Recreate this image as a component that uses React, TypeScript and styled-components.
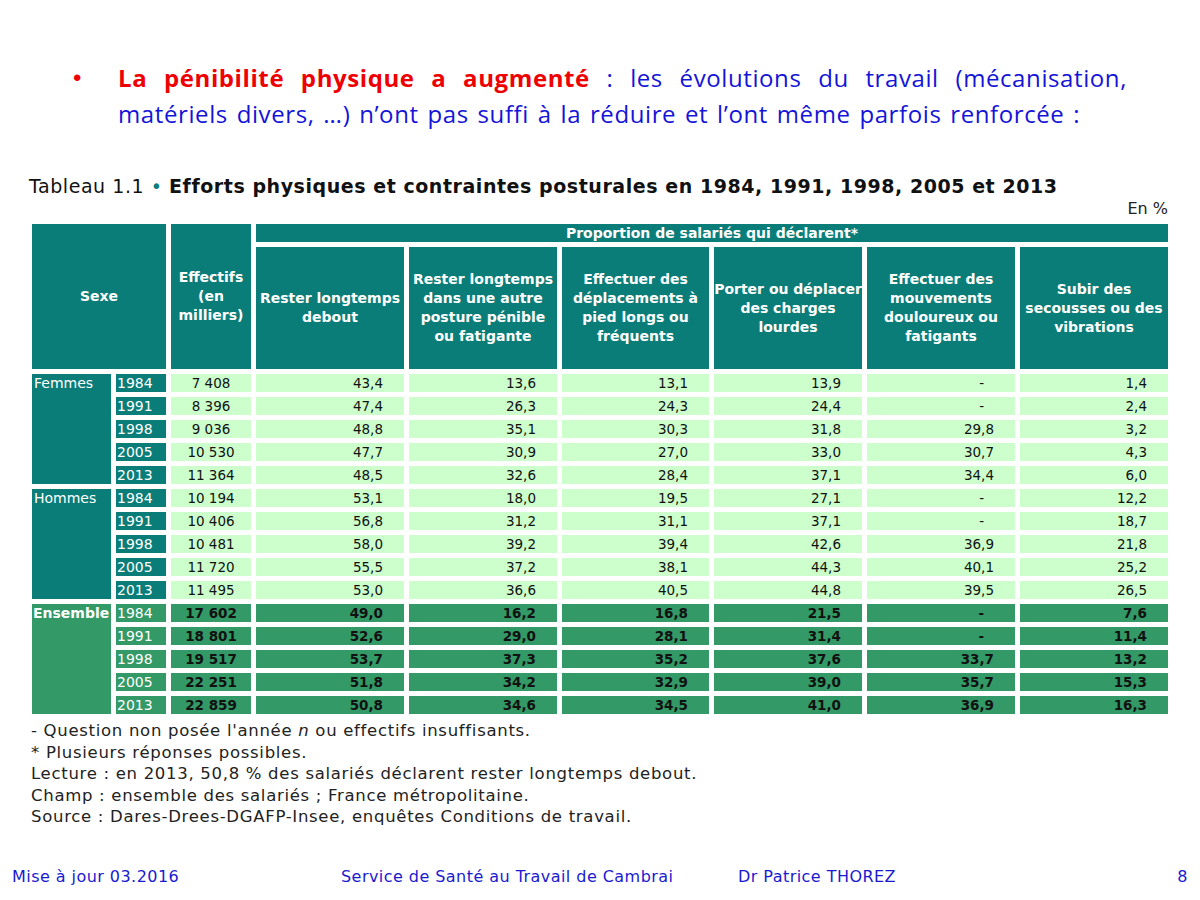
import React from "react";
import styled, { createGlobalStyle } from "styled-components";

const Global = createGlobalStyle`
  html, body { margin: 0; padding: 0; background: #ffffff; }
  * { box-sizing: border-box; }
`;

const TEAL = "#0b7d79";
const LIGHT = "#ccffcc";
const GREEN = "#339966";

const Page = styled.div`
  width: 1200px;
  height: 900px;
  display: flex;
  flex-direction: column;
  overflow: hidden;
  background: #fff;
`;

const Intro = styled.div`
  display: flex;
  margin-top: 60px;
  padding-left: 73px;
  font-family: "Open Sans", "Noto Sans", sans-serif;
  font-size: 24px;
  line-height: 36px;
`;

const Bullet = styled.span`
  width: 45px;
  flex: none;
  color: #ee0000;
  font-family: "Liberation Sans", sans-serif;
`;

const IntroText = styled.div`
  width: 1009px;
  color: #1414d8;
  letter-spacing: 0.6px;
  word-spacing: 2px;
`;

const IntroLine = styled.span<{ $justify?: boolean }>`
  display: block;
  white-space: nowrap;
  ${(p) =>
    p.$justify
      ? `white-space: normal; text-align: justify; text-align-last: justify;`
      : ""}
`;

const Red = styled.strong`
  color: #ee0000;
  font-weight: 700;
`;

const Title = styled.div`
  margin: 42px 0 0 29px;
  font-family: "DejaVu Sans", Verdana, sans-serif;
  font-size: 19px;
  letter-spacing: 0.55px;
  line-height: 24px;
  color: #111;
  white-space: nowrap;
`;

const Dot = styled.span`
  color: ${TEAL};
`;

const Unit = styled.div`
  margin-top: 2px;
  width: 1168px;
  text-align: right;
  font-family: "DejaVu Sans", Verdana, sans-serif;
  font-size: 16px;
  line-height: 18px;
  color: #222;
`;

const Grid = styled.div`
  margin: 6px 0 0 32px;
  display: grid;
  grid-template-columns: 79px 50px 80px 148px 148px 147px 148px 148px 148px;
  grid-template-rows: 18px 122px repeat(15, 18px);
  gap: 5px;
  font-family: "DejaVu Sans", Verdana, sans-serif;
  font-size: 13.5px;
`;

const Head = styled.div<{ $col: string; $row: string }>`
  grid-column: ${(p) => p.$col};
  grid-row: ${(p) => p.$row};
  background: ${TEAL};
  color: #fff;
  font-weight: 700;
  font-size: 14px;
  line-height: 19px;
  display: flex;
  align-items: center;
  justify-content: center;
  text-align: center;
  white-space: nowrap;
  overflow: hidden;
`;

const Group = styled.div<{ $row: number; $total?: boolean }>`
  grid-column: 1;
  grid-row: ${(p) => p.$row} / span 5;
  background: ${(p) => (p.$total ? GREEN : TEAL)};
  color: #fff;
  font-weight: ${(p) => (p.$total ? 700 : 400)};
  line-height: 18px;
  padding-left: ${(p) => (p.$total ? 1 : 2)}px;
  font-size: 14px;
  white-space: nowrap;
`;

const Year = styled.div<{ $total?: boolean }>`
  grid-column: 2;
  background: ${(p) => (p.$total ? GREEN : TEAL)};
  color: #fff;
  line-height: 18px;
  padding-left: 1px;
  font-size: 14px;
`;

const Cell = styled.div<{ $total?: boolean; $center?: boolean; $dash?: boolean }>`
  background: ${(p) => (p.$total ? GREEN : LIGHT)};
  color: #111;
  font-weight: ${(p) => (p.$total ? 700 : 400)};
  line-height: 18px;
  text-align: ${(p) => (p.$center ? "center" : "right")};
  padding-right: ${(p) => (p.$center ? 0 : p.$dash ? 31 : 21)}px;
  white-space: nowrap;
`;

const Notes = styled.div`
  margin: 6px 0 0 31px;
  font-family: "DejaVu Sans", sans-serif;
  font-size: 16.5px;
  letter-spacing: 0.7px;
  line-height: 21.6px;
  color: #222;
`;

const NoteLine = styled.div`
  white-space: nowrap;
`;

const Footer = styled.div`
  margin-top: auto;
  padding: 0 12px 13px 12px;
  display: flex;
  font-family: "DejaVu Sans", sans-serif;
  font-size: 16px;
  letter-spacing: 0.45px;
  line-height: 20px;
  color: #1a1ad0;
`;

const FootItem = styled.span<{ $w?: number }>`
  ${(p) => (p.$w ? `width: ${p.$w}px; flex: none;` : "flex: 1;")}
  white-space: nowrap;
`;

const FootNum = styled.span`
  flex: none;
`;

type Row = [string, string, string, string, string, string, string, string];

const groups: { name: string; total?: boolean; rows: Row[] }[] = [
  {
    name: "Femmes",
    rows: [
      ["1984", "7 408", "43,4", "13,6", "13,1", "13,9", "-", "1,4"],
      ["1991", "8 396", "47,4", "26,3", "24,3", "24,4", "-", "2,4"],
      ["1998", "9 036", "48,8", "35,1", "30,3", "31,8", "29,8", "3,2"],
      ["2005", "10 530", "47,7", "30,9", "27,0", "33,0", "30,7", "4,3"],
      ["2013", "11 364", "48,5", "32,6", "28,4", "37,1", "34,4", "6,0"],
    ],
  },
  {
    name: "Hommes",
    rows: [
      ["1984", "10 194", "53,1", "18,0", "19,5", "27,1", "-", "12,2"],
      ["1991", "10 406", "56,8", "31,2", "31,1", "37,1", "-", "18,7"],
      ["1998", "10 481", "58,0", "39,2", "39,4", "42,6", "36,9", "21,8"],
      ["2005", "11 720", "55,5", "37,2", "38,1", "44,3", "40,1", "25,2"],
      ["2013", "11 495", "53,0", "36,6", "40,5", "44,8", "39,5", "26,5"],
    ],
  },
  {
    name: "Ensemble",
    total: true,
    rows: [
      ["1984", "17 602", "49,0", "16,2", "16,8", "21,5", "-", "7,6"],
      ["1991", "18 801", "52,6", "29,0", "28,1", "31,4", "-", "11,4"],
      ["1998", "19 517", "53,7", "37,3", "35,2", "37,6", "33,7", "13,2"],
      ["2005", "22 251", "51,8", "34,2", "32,9", "39,0", "35,7", "15,3"],
      ["2013", "22 859", "50,8", "34,6", "34,5", "41,0", "36,9", "16,3"],
    ],
  },
];

const columns: React.ReactNode[] = [
  <>Rester longtemps<br />debout</>,
  <>Rester longtemps<br />dans une autre<br />posture pénible<br />ou fatigante</>,
  <>Effectuer des<br />déplacements à<br />pied longs ou<br />fréquents</>,
  <>Porter ou déplacer<br />des charges<br />lourdes</>,
  <>Effectuer des<br />mouvements<br />douloureux ou<br />fatigants</>,
  <>Subir des<br />secousses ou des<br />vibrations</>,
];

export default function App() {
  return (
    <Page>
      <Global />
      <Intro>
        <Bullet>•</Bullet>
        <IntroText>
          <IntroLine $justify>
            <Red>La pénibilité physique a augmenté</Red> : les évolutions du travail (mécanisation,
          </IntroLine>
          <IntroLine>
            matériels divers, …) n’ont pas suffi à la réduire et l’ont même parfois renforcée :
          </IntroLine>
        </IntroText>
      </Intro>
      <Title>
        Tableau 1.1 <Dot>•</Dot>{" "}
        <strong>Efforts physiques et contraintes posturales en 1984, 1991, 1998, 2005 et 2013</strong>
      </Title>
      <Unit>En %</Unit>
      <Grid>
        <Head $col="1 / 3" $row="1 / 3">Sexe</Head>
        <Head $col="3" $row="1 / 3">Effectifs<br />(en<br />milliers)</Head>
        <Head $col="4 / 10" $row="1">Proportion de salariés qui déclarent*</Head>
        {columns.map((c, i) => (
          <Head key={i} $col={String(4 + i)} $row="2">
            <span>{c}</span>
          </Head>
        ))}
        {groups.map((g, gi) => (
          <React.Fragment key={g.name}>
            <Group $row={3 + gi * 5} $total={g.total}>{g.name}</Group>
            {g.rows.map((r, ri) => (
              <React.Fragment key={r[0]}>
                <Year $total={g.total} style={{ gridRow: 3 + gi * 5 + ri }}>{r[0]}</Year>
                {r.slice(1).map((v, vi) => (
                  <Cell key={vi} $total={g.total} $center={vi === 0} $dash={v === "-"}>
                    {v}
                  </Cell>
                ))}
              </React.Fragment>
            ))}
          </React.Fragment>
        ))}
      </Grid>
      <Notes>
        <NoteLine>- Question non posée l'année <i>n</i> ou effectifs insuffisants.</NoteLine>
        <NoteLine>* Plusieurs réponses possibles.</NoteLine>
        <NoteLine>Lecture : en 2013, 50,8 % des salariés déclarent rester longtemps debout.</NoteLine>
        <NoteLine>Champ : ensemble des salariés ; France métropolitaine.</NoteLine>
        <NoteLine>Source : Dares-Drees-DGAFP-Insee, enquêtes Conditions de travail.</NoteLine>
      </Notes>
      <Footer>
        <FootItem $w={329}>Mise à jour 03.2016</FootItem>
        <FootItem $w={397}>Service de Santé au Travail de Cambrai</FootItem>
        <FootItem>Dr Patrice THOREZ</FootItem>
        <FootNum>8</FootNum>
      </Footer>
    </Page>
  );
}
